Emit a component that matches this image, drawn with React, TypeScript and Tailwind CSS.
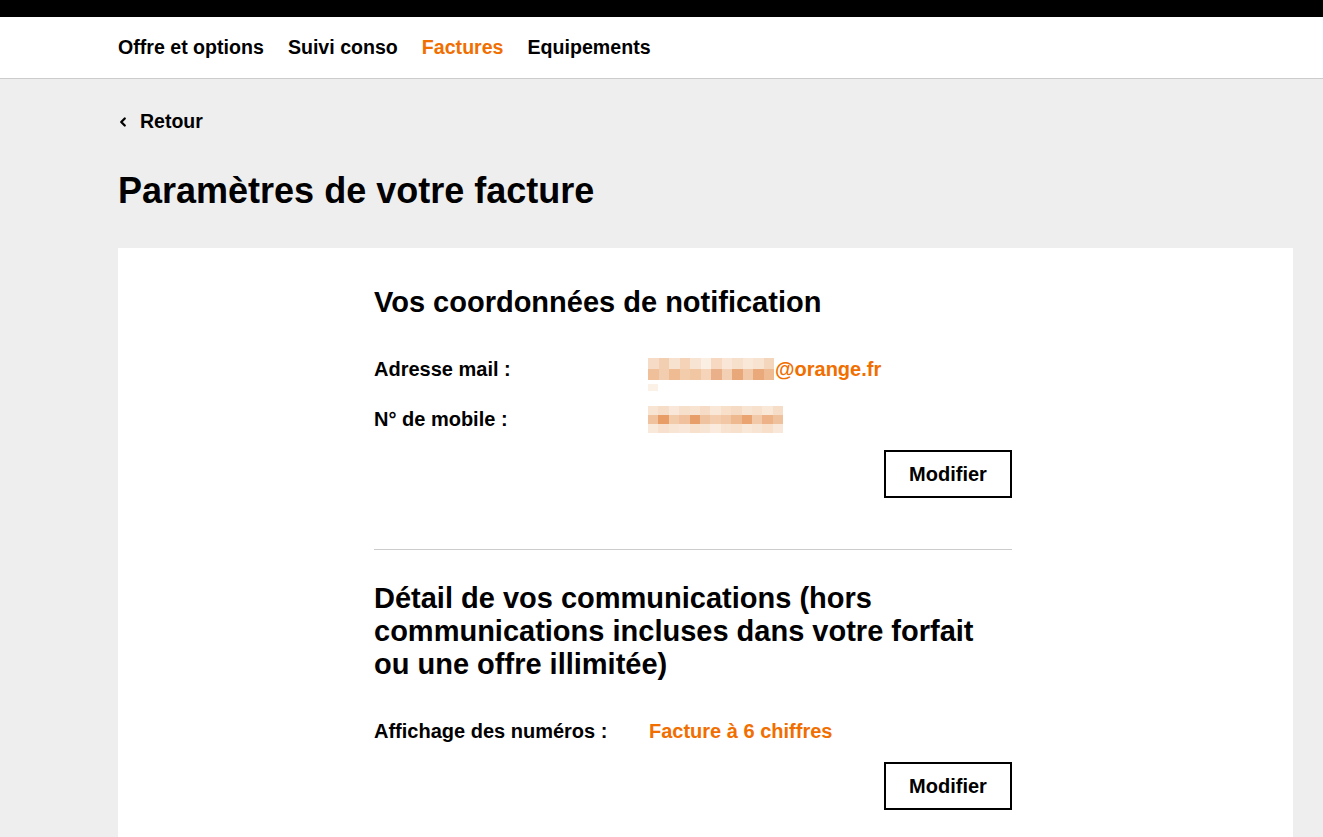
import { ChevronLeft } from "lucide-react";

const navItems = [
  { label: "Offre et options", active: false },
  { label: "Suivi conso", active: false },
  { label: "Factures", active: true },
  { label: "Equipements", active: false },
];

// pixelated placeholders for hidden personal data
const mailPixels = [
  ["bg-[#f6dcc6]", "bg-[#f3cfb2]", "bg-[#f7e2cf]", "bg-[#f4d3b8]", "bg-[#f8e4d2]", "bg-[#fbeee2]", "bg-[#f6d9c0]", "bg-[#f9e6d6]", "bg-[#f7e0cb]", "bg-[#f9e7d7]", "bg-[#f8e3d1]", "bg-[#f4d6bd]"],
  ["bg-[#f0c09a]", "bg-[#f3cdaf]", "bg-[#eebb92]", "bg-[#f3ccac]", "bg-[#f1c6a3]", "bg-[#f5d4b9]", "bg-[#eab08a]", "bg-[#f3cfb3]", "bg-[#e9a87a]", "bg-[#f2c9a8]", "bg-[#eaa97b]", "bg-[#eebb92]"],
];

const mobilePixels = [
  ["bg-[#f8e4d3]", "bg-[#f6ddc8]", "bg-[#f9e8d9]", "bg-[#f7e0cb]", "bg-[#f8e3d1]", "bg-[#f6dcc6]", "bg-[#f9e7d7]", "bg-[#f7dfca]", "bg-[#f5dac4]", "bg-[#f8e4d3]", "bg-[#f7e1cd]", "bg-[#f9e7d8]", "bg-[#f6ddc7]"],
  ["bg-[#f0c29e]", "bg-[#e89c66]", "bg-[#f2cbab]", "bg-[#f0c19c]", "bg-[#e89e68]", "bg-[#f0c3a0]", "bg-[#f3cdae]", "bg-[#f1c7a5]", "bg-[#eeb98f]", "bg-[#eaa472]", "bg-[#f2caa9]", "bg-[#edb287]", "bg-[#f0c19d]"],
  ["bg-[#f9e9db]", "bg-[#f7e1ce]", "bg-[#f8e5d4]", "bg-[#f9e8da]", "bg-[#f7e0cc]", "bg-[#f8e4d3]", "bg-[#faebde]", "bg-[#f8e3d1]", "bg-[#f7e1cd]", "bg-[#f9e7d8]", "bg-[#f8e4d2]", "bg-[#f7dfca]", "bg-[#f9e8d9]"],
];

function Pixels({ rows, cell }: { rows: string[][]; cell: string }) {
  return (
    <div className="flex flex-col">
      {rows.map((row, i) => (
        <div key={i} className="flex">
          {row.map((c, j) => (
            <div key={j} className={`${cell} ${c}`} />
          ))}
        </div>
      ))}
    </div>
  );
}

function InfoRow({ label, children }: { label: string; children: React.ReactNode }) {
  return (
    <div className="flex h-[24px] items-center">
      <div className="w-[274px] shrink-0 text-[20px] font-bold text-black">{label}</div>
      <div className="flex items-center">{children}</div>
    </div>
  );
}

function ModifyButton() {
  return (
    <div className="flex justify-end">
      <button
        type="button"
        className="h-[48px] w-[128px] border-2 border-black bg-white text-[20px] font-bold text-black"
      >
        Modifier
      </button>
    </div>
  );
}

export default function App() {
  return (
    <div className="min-h-screen bg-[#eeeeee] font-['Liberation_Sans',Arial,sans-serif] text-black">
      <div className="h-[17px] bg-black" />
      <nav className="flex h-[62px] items-center gap-[24px] border-b border-[#cccccc] bg-white pl-[118px]">
        {navItems.map((item) => (
          <a
            key={item.label}
            href="#"
            className={`text-[19.6px] font-bold ${item.active ? "text-[#f16e00]" : "text-black"}`}
          >
            {item.label}
          </a>
        ))}
      </nav>

      <div className="px-[118px] pt-[28px]">
        <a href="#" className="flex items-center gap-[10px] text-[19.5px] font-bold">
          <ChevronLeft size={14} strokeWidth={4} className="-ml-[2px]" />
          Retour
        </a>
        <h1 className="mt-[33px] text-[36px] font-bold leading-[1.2]">Paramètres de votre facture</h1>
      </div>

      <div className="ml-[118px] mr-[30px] mt-[36px] bg-white pb-[30px] pl-[256px] pt-[36px]">
        <div className="w-[638px]">
          <h2 className="text-[29px] font-bold leading-[36px]">Vos coordonnées de notification</h2>
          <div className="mt-[37px] flex flex-col gap-[26px]">
            <InfoRow label="Adresse mail :">
              <div className="relative flex items-center">
                <Pixels rows={mailPixels} cell="h-[11px] w-[10.5px]" />
                <span className="ml-px text-[20px] font-bold text-[#f16e00]">@orange.fr</span>
                <div className="absolute left-0 top-full h-[7px] w-[10px] bg-[#fbf1e7]" />
              </div>
            </InfoRow>
            <InfoRow label="N° de mobile :">
              <Pixels rows={mobilePixels} cell="h-[9px] w-[10.4px]" />
            </InfoRow>
          </div>
          <div className="mt-[19px]">
            <ModifyButton />
          </div>
          <div className="mt-[51px] h-px bg-[#cccccc]" />

          <h2 className="mt-[32px] text-[29px] font-bold leading-[33px]">
            Détail de vos communications (hors communications incluses dans votre forfait ou une offre illimitée)
          </h2>
          <div className="mt-[38px]">
            <InfoRow label="Affichage des numéros :">
              <span className="pl-px text-[20px] font-bold text-[#f16e00]">Facture à 6 chiffres</span>
            </InfoRow>
          </div>
          <div className="mt-[19px]">
            <ModifyButton />
          </div>
        </div>
      </div>
    </div>
  );
}
